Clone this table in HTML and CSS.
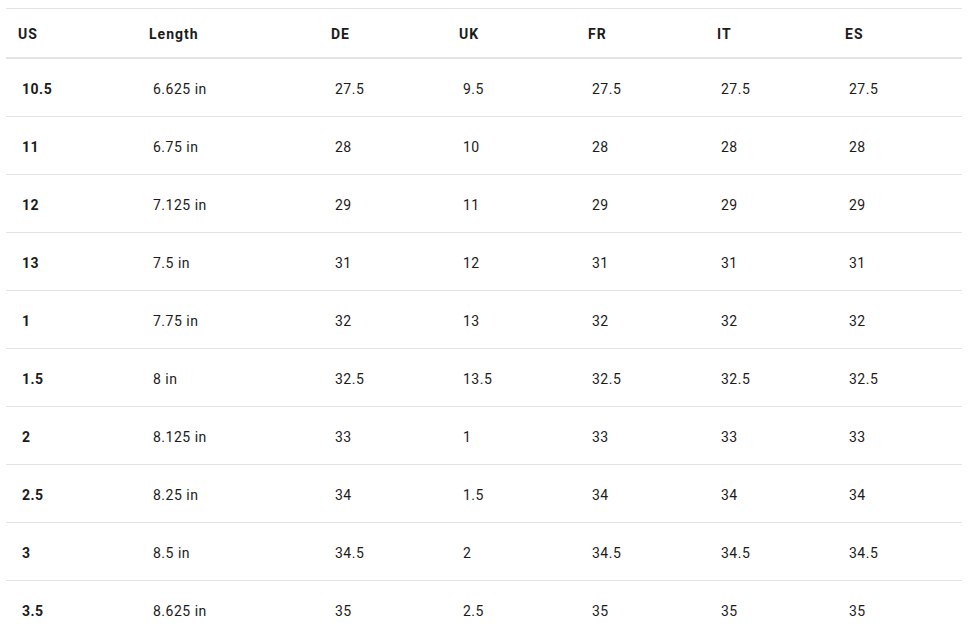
FILE: index.html
```html
<!DOCTYPE html>
<html>
<head>
<meta charset="utf-8">
<link rel="stylesheet" href="styles.css">
</head>
<body>
<div class="wrap">
<table class="sizes">
<colgroup>
<col class="c1"><col class="c2"><col class="c3"><col class="c4"><col class="c5"><col class="c6"><col class="c7">
</colgroup>
<thead>
<tr><th>US</th><th>Length</th><th>DE</th><th>UK</th><th>FR</th><th>IT</th><th>ES</th></tr>
</thead>
<tbody>
<tr><td class="us">10.5</td><td>6.625 in</td><td>27.5</td><td>9.5</td><td>27.5</td><td>27.5</td><td>27.5</td></tr>
<tr><td class="us">11</td><td>6.75 in</td><td>28</td><td>10</td><td>28</td><td>28</td><td>28</td></tr>
<tr><td class="us">12</td><td>7.125 in</td><td>29</td><td>11</td><td>29</td><td>29</td><td>29</td></tr>
<tr><td class="us">13</td><td>7.5 in</td><td>31</td><td>12</td><td>31</td><td>31</td><td>31</td></tr>
<tr><td class="us">1</td><td>7.75 in</td><td>32</td><td>13</td><td>32</td><td>32</td><td>32</td></tr>
<tr><td class="us">1.5</td><td>8 in</td><td>32.5</td><td>13.5</td><td>32.5</td><td>32.5</td><td>32.5</td></tr>
<tr><td class="us">2</td><td>8.125 in</td><td>33</td><td>1</td><td>33</td><td>33</td><td>33</td></tr>
<tr><td class="us">2.5</td><td>8.25 in</td><td>34</td><td>1.5</td><td>34</td><td>34</td><td>34</td></tr>
<tr><td class="us">3</td><td>8.5 in</td><td>34.5</td><td>2</td><td>34.5</td><td>34.5</td><td>34.5</td></tr>
<tr><td class="us">3.5</td><td>8.625 in</td><td>35</td><td>2.5</td><td>35</td><td>35</td><td>35</td></tr>
</tbody>
</table>
</div>
</body>
</html>
```
FILE: styles.css
```css
html, body {
  margin: 0;
  padding: 0;
  background: #ffffff;
}
body {
  font-family: Roboto, "Liberation Sans", sans-serif;
  color: #1b1b1b;
}
.wrap {
  padding: 8px 10px 0 6px;
}
.sizes {
  width: 956px;
  border-collapse: collapse;
  table-layout: fixed;
  font-size: 14px;
}
.c1 { width: 131px; }
.c2 { width: 182px; }
.c3 { width: 128px; }
.c4 { width: 129px; }
.c5 { width: 129px; }
.c6 { width: 128px; }
.c7 { width: 129px; }
.sizes th {
  text-align: left;
  font-weight: 700;
  letter-spacing: 1px;
  height: 46px;
  padding: 2px 0 0 12px;
  border-top: 1px solid #e1e3e7;
  border-bottom: 2px solid #e1e3e7;
  vertical-align: middle;
}
.sizes td {
  height: 54px;
  padding: 3px 0 0 16px;
  border-bottom: 1px solid #e1e3e7;
  vertical-align: middle;
  font-weight: 400;
  letter-spacing: 0.5px;
}
.sizes td.us {
  font-weight: 700;
}
```
